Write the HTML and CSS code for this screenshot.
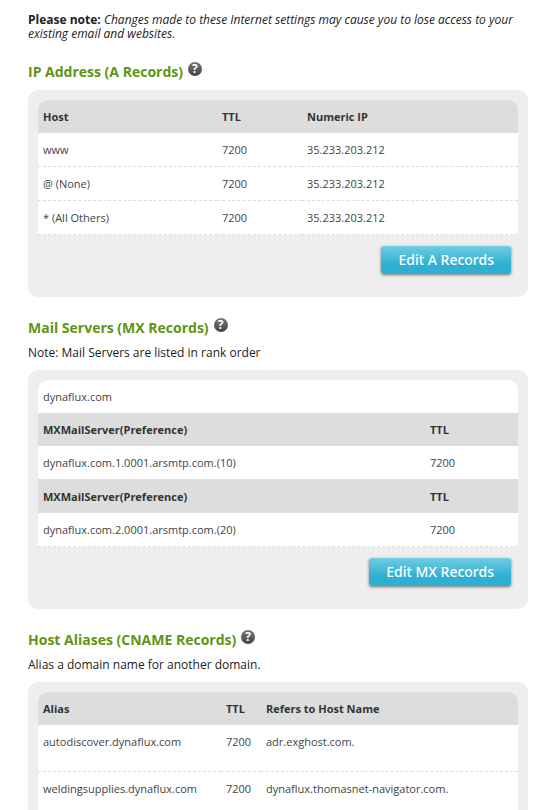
FILE: index.html
```html
<!DOCTYPE html>
<html lang="en">
<head>
<meta charset="utf-8">
<title>DNS Records</title>
<link rel="stylesheet" href="styles.css">
</head>
<body>
<main class="page">
  <p class="notice"><strong>Please note:</strong> <em>Changes made to these Internet settings may cause you to lose access to your existing email and websites.</em></p>

  <section class="section">
    <div class="heading">
      <h2 class="title">IP Address (A Records)</h2>
      <button class="help" type="button" title="Help">?</button>
    </div>
    <div class="panel">
      <table class="records">
        <colgroup><col class="a-host"><col class="a-ttl"><col></colgroup>
        <thead>
          <tr><th>Host</th><th>TTL</th><th>Numeric IP</th></tr>
        </thead>
        <tbody>
          <tr><td>www</td><td>7200</td><td>35.233.203.212</td></tr>
          <tr><td>@ (None)</td><td>7200</td><td>35.233.203.212</td></tr>
          <tr><td>* (All Others)</td><td>7200</td><td>35.233.203.212</td></tr>
        </tbody>
      </table>
      <div class="actions"><button class="edit" type="button">Edit A Records</button></div>
    </div>
  </section>

  <section class="section">
    <div class="heading">
      <h2 class="title">Mail Servers (MX Records)</h2>
      <button class="help" type="button" title="Help">?</button>
    </div>
    <p class="note">Note: Mail Servers are listed in rank order</p>
    <div class="panel">
      <table class="records">
        <colgroup><col><col class="mx-ttl"></colgroup>
        <tbody>
          <tr class="domain"><td colspan="2">dynaflux.com</td></tr>
          <tr><th>MXMailServer(Preference)</th><th>TTL</th></tr>
          <tr class="joined"><td>dynaflux.com.1.0001.arsmtp.com.(10)</td><td>7200</td></tr>
          <tr><th>MXMailServer(Preference)</th><th>TTL</th></tr>
          <tr><td>dynaflux.com.2.0001.arsmtp.com.(20)</td><td>7200</td></tr>
        </tbody>
      </table>
      <div class="actions"><button class="edit" type="button">Edit MX Records</button></div>
    </div>
  </section>

  <section class="section">
    <div class="heading">
      <h2 class="title">Host Aliases (CNAME Records)</h2>
      <button class="help" type="button" title="Help">?</button>
    </div>
    <p class="note">Alias a domain name for another domain.</p>
    <div class="panel">
      <table class="records aliases">
        <colgroup><col class="c-alias"><col class="c-ttl"><col></colgroup>
        <thead>
          <tr><th>Alias</th><th>TTL</th><th>Refers to Host Name</th></tr>
        </thead>
        <tbody>
          <tr><td>autodiscover.dynaflux.com</td><td>7200</td><td>adr.exghost.com.</td></tr>
          <tr><td>weldingsupplies.dynaflux.com</td><td>7200</td><td>dynaflux.thomasnet-navigator.com.</td></tr>
        </tbody>
      </table>
    </div>
  </section>
</main>
</body>
</html>
```

FILE: styles.css
```css
body {
  margin: 0;
  background: #fff;
  color: #222;
  font: 12px/14px "Open Sans", "Noto Sans", sans-serif;
}

.page {
  padding: 13px 29px 0 28px;
}

.notice,
.note,
.title {
  margin: 0;
}

.section {
  margin-top: 21px;
}

.heading {
  display: flex;
  align-items: flex-start;
  gap: 5px;
  margin-bottom: 8px;
}

.title {
  color: #5f9414;
  font-size: 14px;
  line-height: 20px;
  font-weight: 700;
}

.help {
  width: 14px;
  height: 14px;
  padding: 0;
  border: 0;
  border-radius: 50%;
  background: linear-gradient(#777, #444);
  color: #fff;
  font: 700 12px/14px "Open Sans", sans-serif;
  text-align: center;
}

.note {
  margin-bottom: 10px;
}

.panel {
  padding: 10px;
  border-radius: 10px;
  background: #eee;
}

.records {
  width: 100%;
  table-layout: fixed;
  border-spacing: 0;
  border-radius: 10px 10px 0 0;
  overflow: hidden;
  color: #444;
  font-size: 11px;
  line-height: 15px;
}

.records th,
.records td {
  padding: 9px 5px;
  text-align: left;
  vertical-align: top;
}

.records th {
  background: #ddd;
  color: #333;
  font-weight: 700;
}

.records td {
  border-bottom: 1px dashed #ddd;
  background: #fff;
}

.records .domain td {
  border-bottom: 0;
}

.records .joined td {
  border-bottom-style: solid;
}

.aliases td {
  padding-bottom: 22px;
}

.a-host { width: 179px; }
.a-ttl { width: 85px; }
.mx-ttl { width: 93px; }
.c-alias { width: 183px; }
.c-ttl { width: 40px; }

.actions {
  display: flex;
  justify-content: flex-end;
  padding: 11px 7px 13px;
}

.edit {
  height: 28px;
  padding: 0 17px;
  border: 0;
  border-radius: 3px;
  background: linear-gradient(#6fcde2, #2fb0d2 65%);
  box-shadow: 0 1px 3px rgba(0, 0, 0, 0.5);
  color: #fff;
  font: 500 14px/28px "Noto Sans", "Open Sans", sans-serif;
}
```
